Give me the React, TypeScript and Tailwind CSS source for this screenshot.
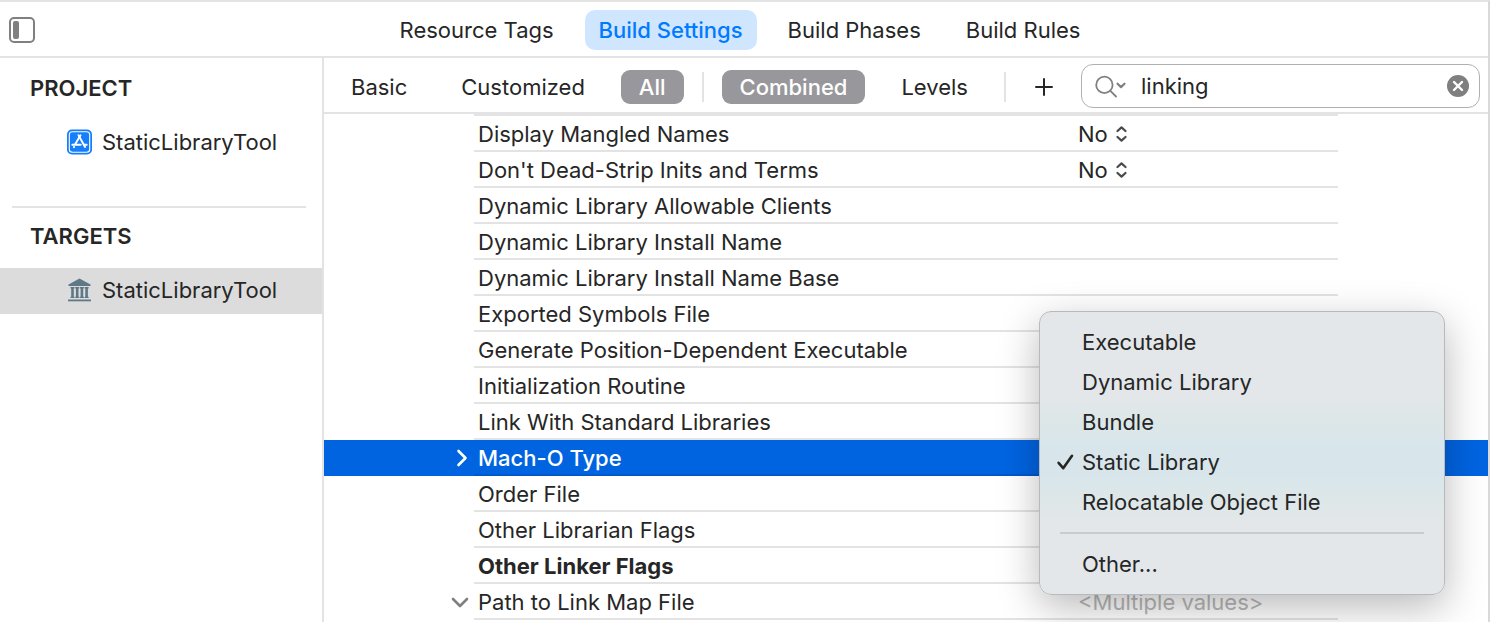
import { useState } from 'react';
import clsx from 'clsx';

interface Setting {
    name: string;
    value?: string;
    kind?: 'select' | 'menu' | 'multiple';
    disclosure?: 'open' | 'closed';
    bold?: boolean;
}

const tabs = ['Resource Tags', 'Build Settings', 'Build Phases', 'Build Rules'];

const settings: Setting[] = [
    { name: 'Display Mangled Names', value: 'No', kind: 'select' },
    { name: "Don't Dead-Strip Inits and Terms", value: 'No', kind: 'select' },
    { name: 'Dynamic Library Allowable Clients' },
    { name: 'Dynamic Library Install Name' },
    { name: 'Dynamic Library Install Name Base' },
    { name: 'Exported Symbols File' },
    { name: 'Generate Position-Dependent Executable' },
    { name: 'Initialization Routine' },
    { name: 'Link With Standard Libraries' },
    { name: 'Mach-O Type', kind: 'menu', disclosure: 'closed' },
    { name: 'Order File' },
    { name: 'Other Librarian Flags' },
    { name: 'Other Linker Flags', bold: true },
    { name: 'Path to Link Map File', value: '<Multiple values>', kind: 'multiple', disclosure: 'open' },
];

const machOTypes = ['Executable', 'Dynamic Library', 'Bundle', 'Static Library', 'Relocatable Object File'];

function SidebarIcon() {
    return (
        <svg width="26" height="26" viewBox="0 0 26 26" fill="none" aria-hidden="true">
            <rect x="1" y="1" width="24" height="24" rx="4" stroke="#808080" strokeWidth="2" />
            <rect x="4" y="4" width="6" height="18" rx="2" fill="#808080" />
        </svg>
    );
}

function ProjectIcon() {
    return (
        <svg width="26" height="26" viewBox="0 0 26 26" fill="none" aria-hidden="true">
            <rect x="0" y="0.5" width="25" height="25" rx="5" fill="#147efb" />
            <rect x="2.3" y="2.8" width="20.4" height="20.4" rx="3" stroke="#fff" strokeWidth="1.1" />
            <g stroke="#fff" strokeWidth="1.9" strokeLinecap="round">
                <path d="M13.5 6.2 8.3 15" />
                <path d="M11.5 6.2 18.1 18" />
                <path d="M5.3 15.8h8.4M16.9 15.8h2.8" />
                <path d="M7.1 17.8l-.2.4" />
            </g>
        </svg>
    );
}

function LibraryIcon() {
    return (
        <svg width="26" height="26" viewBox="0 0 26 26" fill="#5f7887" aria-hidden="true">
            <path d="M12.5 1.5 23.5 7.6V9h-22V7.6z" />
            <path d="M3.5 10h4v1.4h-.7v8.4h.7V21h-4v-1.2h.7v-8.4h-.7z" />
            <path d="M8.2 10h4v1.4h-.7v8.4h.7V21h-4v-1.2h.7v-8.4h-.7z" />
            <path d="M12.9 10h4v1.4h-.7v8.4h.7V21h-4v-1.2h.7v-8.4h-.7z" />
            <path d="M17.6 10h4v1.4h-.7v8.4h.7V21h-4v-1.2h.7v-8.4h-.7z" />
            <path d="M1 22.5h23v1.8H1z" />
        </svg>
    );
}

function UpDownIcon() {
    return (
        <svg width="12" height="18" viewBox="0 0 12 18" fill="none" stroke="#4a4a4a" strokeWidth="2.2" strokeLinecap="round" strokeLinejoin="round" aria-hidden="true">
            <path d="M1.5 6 5.5 2.4 9.5 6M1.5 12l4 3.6 4-3.6" />
        </svg>
    );
}

function Heading({ children }: { children: string }) {
    return <h2 className="mb-1 flex h-14 items-center pl-[30px] text-[22px] font-semibold">{children}</h2>;
}

function SidebarItem({ icon, selected }: { icon: React.ReactNode; selected?: boolean }) {
    return (
        <button className={clsx('flex h-[46px] w-full items-center gap-[9px] pb-0.5 pl-[67px]', selected && 'bg-[#dcdcdc]')}>
            {icon}
            StaticLibraryTool
        </button>
    );
}

function FilterButton({ label, active }: { label: string; active?: boolean }) {
    return (
        <button
            className={clsx(
                'h-[34px] rounded-[9px] px-[18px] leading-[34px]',
                active && 'bg-[#98979c] font-medium text-white',
            )}
        >
            {label}
        </button>
    );
}

function Divider() {
    return <div className="h-[30px] w-0.5 bg-[#e3e3e3]" />;
}

function MachOMenu({ value, onChange }: { value: string; onChange: (value: string) => void }) {
    return (
        <div
            role="menu"
            aria-label="Mach-O Type"
            className="absolute -top-[129px] -left-[35px] z-10 w-[406px] rounded-xl border border-[#b7babc] bg-[linear-gradient(to_bottom,#e3e7ea_30%,#dde7e8_38%,#d8e6eb_48%,#d8e6eb_58%,#dee7e8_67%,#e3e7ea_76%)] py-2.5 font-normal text-[#262626] shadow-[0_12px_40px_rgba(0,0,0,0.28)]"
        >
            {machOTypes.map((type) => (
                <button
                    key={type}
                    role="menuitemradio"
                    aria-checked={type === value}
                    onClick={() => onChange(type)}
                    className="flex h-10 w-full items-center pl-4"
                >
                    <span className="w-[26px]">
                        {type === value && (
                            <svg width="18" height="18" viewBox="0 0 18 18" fill="none" stroke="#262626" strokeWidth="2.6" strokeLinecap="round" strokeLinejoin="round" aria-hidden="true">
                                <path d="M2.6 9.8 7.2 15.2 16 2.8" />
                            </svg>
                        )}
                    </span>
                    {type}
                </button>
            ))}
            <div role="separator" className="mx-5 my-2.5 h-0.5 bg-[#c8cccf]" />
            <button role="menuitem" className="flex h-10 w-full items-center pl-[42px]">
                Other...
            </button>
        </div>
    );
}

function SettingRow({ setting }: { setting: Setting }) {
    const [machO, setMachO] = useState('Static Library');
    const selected = setting.kind === 'menu';
    const line = selected ? 'border-[#0257cb]' : 'border-[#e3e3e3]';

    return (
        <tr className={clsx('h-9', selected && 'bg-[#0064e1] text-white')}>
            <td className="p-0 align-middle">
                {setting.disclosure && (
                    <button
                        aria-label={`Toggle ${setting.name}`}
                        aria-expanded={setting.disclosure === 'open'}
                        className="mr-1 ml-auto flex size-5 items-center justify-center"
                    >
                        {setting.disclosure === 'open' ? (
                            <svg width="18" height="18" viewBox="0 0 18 18" fill="none" stroke="#808080" strokeWidth="2.6" strokeLinecap="round" strokeLinejoin="round" aria-hidden="true">
                                <path d="M2 6l7 7 7-7" />
                            </svg>
                        ) : (
                            <svg width="18" height="18" viewBox="0 0 18 18" fill="none" stroke="#fff" strokeWidth="2.6" strokeLinecap="round" strokeLinejoin="round" aria-hidden="true">
                                <path d="M7.5 2l7 7-7 7" />
                            </svg>
                        )}
                    </button>
                )}
            </td>
            <th
                scope="row"
                className={clsx(
                    'truncate border-b-2 p-0 pt-0.5 pl-1 text-left leading-8',
                    line,
                    setting.bold ? 'font-bold' : selected ? 'font-medium' : 'font-normal',
                )}
            >
                {setting.name}
            </th>
            <td className={clsx('relative border-b-2 p-0 pt-0.5 pl-1 leading-8', line)}>
                {setting.kind === 'select' && (
                    <label className="flex items-center gap-2">
                        <select aria-label={setting.name} defaultValue={setting.value} className="field-sizing-content appearance-none bg-transparent">
                            <option>No</option>
                            <option>Yes</option>
                        </select>
                        <UpDownIcon />
                    </label>
                )}
                {setting.kind === 'multiple' && <span className="text-[#b8b8b8]">{setting.value}</span>}
                {setting.kind === 'menu' && <MachOMenu value={machO} onChange={setMachO} />}
            </td>
            <td />
        </tr>
    );
}

export default function App() {
    const [tab, setTab] = useState('Build Settings');
    const [query, setQuery] = useState('linking');

    return (
        <div className="flex min-h-screen flex-col border-t-2 border-r-2 border-t-[#e3e3e3] border-r-[#d9d9d9] bg-white font-['Inter',sans-serif] text-[22px] leading-7 text-[#262626]">
            <header className="grid h-14 grid-cols-[1fr_auto_1fr] items-center border-b-2 border-[#e3e3e3] pt-0.5 pr-2">
                <button aria-label="Toggle sidebar" className="ml-[9px] size-[26px]">
                    <SidebarIcon />
                </button>
                <nav className="flex gap-[17px]">
                    {tabs.map((name) => (
                        <button
                            key={name}
                            onClick={() => setTab(name)}
                            className={clsx('h-10 rounded-[10px] px-3.5', tab === name && 'bg-[#d0e6ff] font-medium text-[#007aff]')}
                        >
                            {name}
                        </button>
                    ))}
                </nav>
            </header>

            <div className="flex flex-1">
                <aside className="w-[324px] shrink-0 border-r-2 border-[#e3e3e3] pt-0.5">
                    <Heading>PROJECT</Heading>
                    <SidebarItem icon={<ProjectIcon />} />
                    <hr className="mt-10 mr-4 ml-3 border-t-2 border-[#e3e3e3]" />
                    <Heading>TARGETS</Heading>
                    <SidebarItem icon={<LibraryIcon />} selected />
                </aside>

                <main className="min-w-0 flex-1">
                    <div className="flex h-14 items-center border-b-2 border-[#e3e3e3] pt-0.5 pr-2 pl-[9px]">
                        <div className="flex flex-1 items-center justify-between pt-0.5 pr-[17px]">
                            <FilterButton label="Basic" />
                            <FilterButton label="Customized" />
                            <FilterButton label="All" active />
                            <Divider />
                            <FilterButton label="Combined" active />
                            <FilterButton label="Levels" />
                            <Divider />
                            <button aria-label="Add setting" className="flex size-10 items-center justify-center">
                                <svg width="20" height="20" viewBox="0 0 20 20" stroke="#262626" strokeWidth="2" strokeLinecap="round" aria-hidden="true">
                                    <path d="M10 2v16M2 10h16" />
                                </svg>
                            </button>
                        </div>
                        <div className="flex h-11 w-[399px] items-center rounded-xl border border-[#b0b0b0] pr-2.5 pl-3">
                            <svg width="34" height="24" viewBox="0 0 34 24" fill="none" stroke="#808080" strokeWidth="1.8" strokeLinecap="round" strokeLinejoin="round" aria-hidden="true">
                                <circle cx="10.4" cy="10.9" r="8.2" />
                                <path d="M16.4 16.9 22 22.5" />
                                <path d="M23.5 9.7 27 13.1l3.5-3.4" strokeWidth="2.2" />
                            </svg>
                            <input
                                aria-label="Filter settings"
                                value={query}
                                onChange={(e) => setQuery(e.target.value)}
                                className="ml-[13px] min-w-0 flex-1 bg-transparent outline-none"
                            />
                            <button aria-label="Clear filter" onClick={() => setQuery('')}>
                                <svg width="22" height="22" viewBox="0 0 22 22" aria-hidden="true">
                                    <circle cx="11" cy="11" r="11" fill="#7f7f7f" />
                                    <path d="M7 7l8 8M15 7l-8 8" stroke="#fff" strokeWidth="2.4" strokeLinecap="round" />
                                </svg>
                            </button>
                        </div>
                    </div>

                    <div className="mx-[150px] h-0.5 bg-[#e3e3e3]" />
                    <table className="w-full table-fixed border-separate border-spacing-0">
                        <colgroup>
                            <col className="w-[150px]" />
                            <col />
                            <col className="w-[264px]" />
                            <col className="w-[150px]" />
                        </colgroup>
                        <tbody>
                            {settings.map((setting) => (
                                <SettingRow key={setting.name} setting={setting} />
                            ))}
                        </tbody>
                    </table>
                </main>
            </div>
        </div>
    );
}
